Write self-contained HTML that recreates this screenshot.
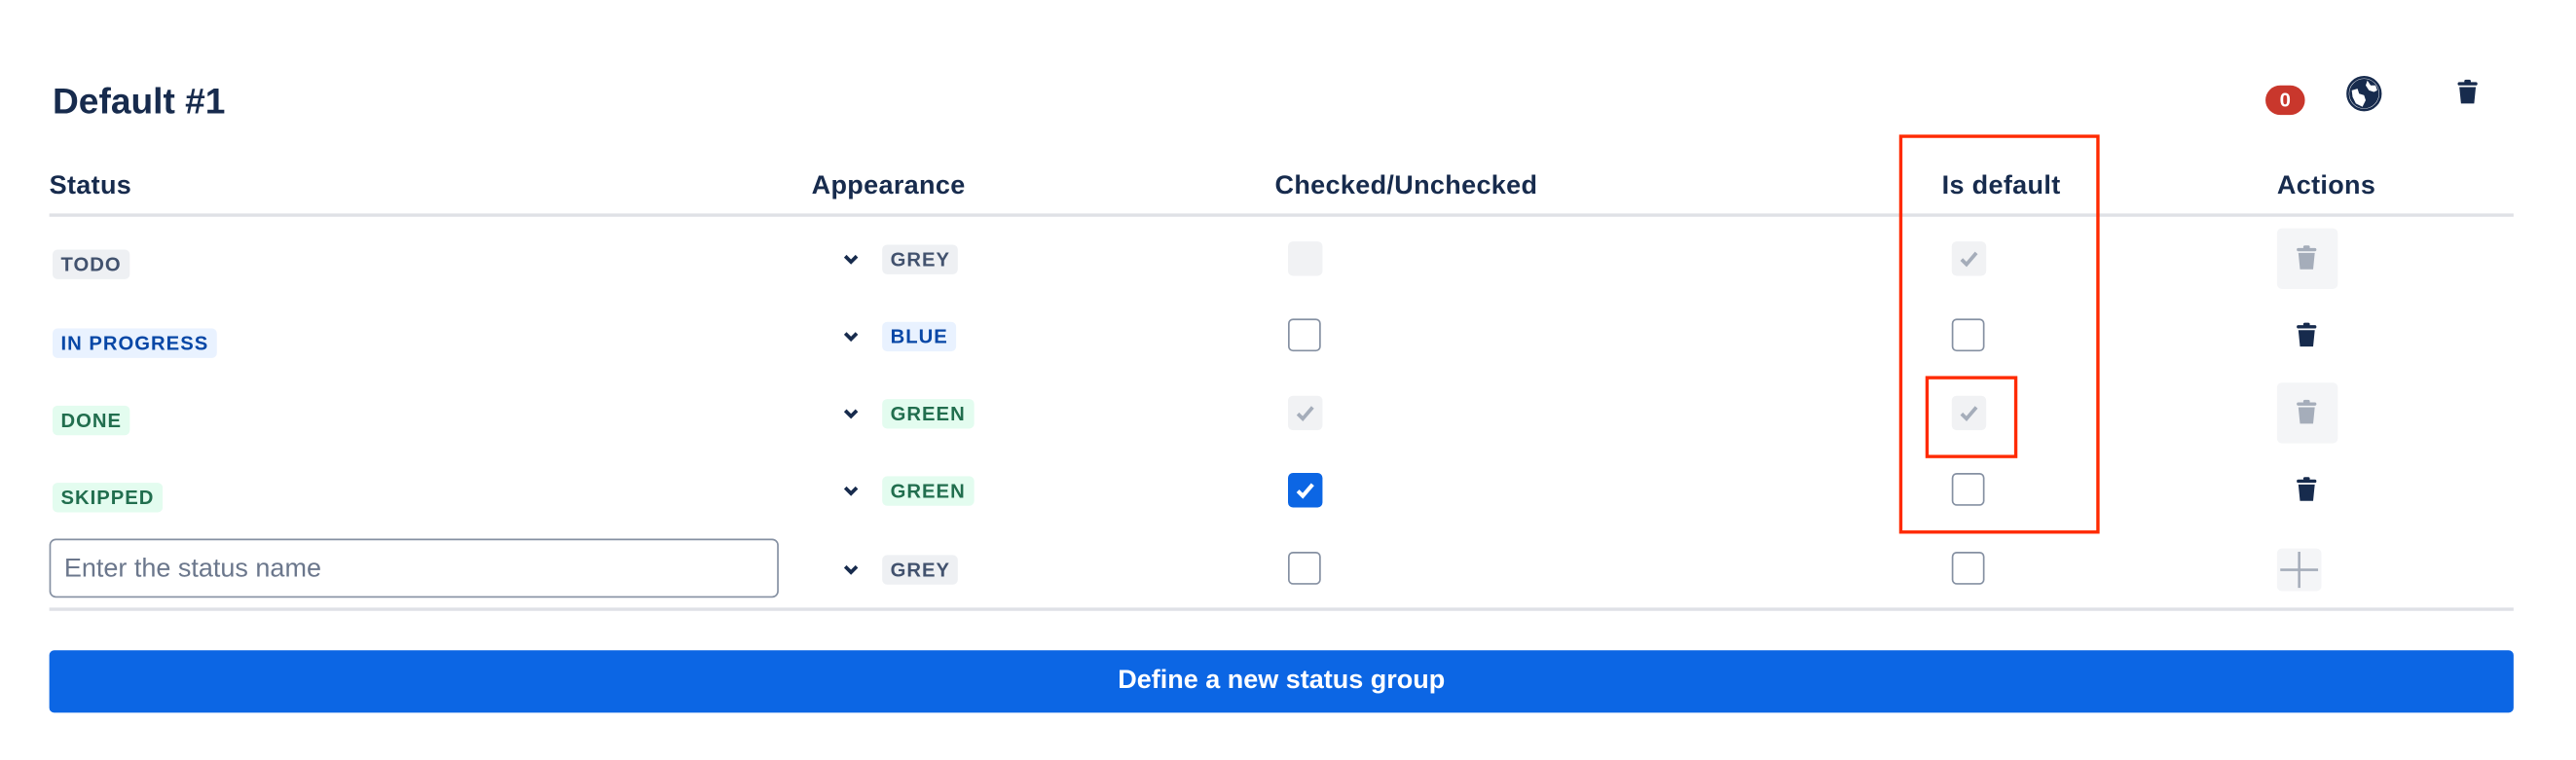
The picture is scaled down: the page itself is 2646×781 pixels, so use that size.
<!DOCTYPE html>
<html><head><meta charset="utf-8"><style>
html,body{margin:0;padding:0;background:#fff;width:2646px;height:780px;overflow:hidden}
#s{position:absolute;left:0;top:0;width:1568px;height:463px;transform:scale(1.6875);transform-origin:0 0;font-family:"Liberation Sans",sans-serif;color:#172B4D}
.a{position:absolute}
.h{position:absolute;top:105px;font-size:16px;font-weight:bold;line-height:18px;letter-spacing:0.2px}
.line{position:absolute;left:30px;width:1500px;height:2px;background:#DFE1E6}
.loz{position:absolute;font-size:12px;font-weight:bold;line-height:18px;height:18px;padding:0 5px;border-radius:3px;text-transform:uppercase;letter-spacing:0.6px}
.g{background:#EEF0F3;color:#42526E}.b{background:#E9F2FF;color:#0747A6}.gr{background:#E3FCEF;color:#216E4E}
.cb{position:absolute;width:18px;height:18px;border:1.5px solid #8590A2;border-radius:3px;box-sizing:content-box}
.dis{position:absolute;width:21px;height:21px;background:#F1F2F4;border-radius:3px}
.chev{position:absolute;width:12px;height:10px}
</style></head><body><div id="s">
<div class="a" style="left:32px;top:49px;font-size:22px;font-weight:bold;line-height:26px">Default #1</div>
<div class="a" style="left:1379px;top:52px;width:24px;height:18px;border-radius:9px;background:#C9372C;color:#fff;font-size:12px;font-weight:bold;text-align:center;line-height:18px">0</div>
<svg class="a" style="left:1428px;top:46px" width="22" height="22" viewBox="0 0 22 22"><circle cx="11" cy="11" r="9" fill="#172B4D"/><circle cx="11" cy="11" r="10" fill="none" stroke="#172B4D" stroke-width="1.5"/><path d="M3.5 9 L7 8 L8 11 L11 12 L12 15 L10 19 L6 17 L4 13Z M13 3 L15 6 L18 6 L19 9 L17 10 L14 9 L12 6Z" fill="#fff"/></svg>
<svg class="a" style="left:1495px;top:48px" width="14" height="16" viewBox="0 0 14 16"><rect x="1" y="2" width="12" height="2" rx="1" fill="#172B4D"/><rect x="5" y="0.5" width="4" height="2" rx="1" fill="#172B4D"/><path d="M2 5 H12 L11 15 H3Z" fill="#172B4D"/></svg>

<div class="h" style="left:30px">Status</div>
<div class="h" style="left:494px">Appearance</div>
<div class="h" style="left:776px">Checked/Unchecked</div>
<div class="h" style="left:1182px">Is default</div>
<div class="h" style="left:1386px">Actions</div>
<div class="line" style="top:130px"></div>

<div class="loz g" style="left:32px;top:152px">Todo</div>
<div class="loz b" style="left:32px;top:200px">In progress</div>
<div class="loz gr" style="left:32px;top:247px">Done</div>
<div class="loz gr" style="left:32px;top:294px">Skipped</div>

<svg class="chev" style="left:512px;top:153px" viewBox="0 0 12 10"><path d="M2.5 3 L6 6.5 L9.5 3" fill="none" stroke="#172B4D" stroke-width="2.2"/></svg>
<svg class="chev" style="left:512px;top:200px" viewBox="0 0 12 10"><path d="M2.5 3 L6 6.5 L9.5 3" fill="none" stroke="#172B4D" stroke-width="2.2"/></svg>
<svg class="chev" style="left:512px;top:247px" viewBox="0 0 12 10"><path d="M2.5 3 L6 6.5 L9.5 3" fill="none" stroke="#172B4D" stroke-width="2.2"/></svg>
<svg class="chev" style="left:512px;top:294px" viewBox="0 0 12 10"><path d="M2.5 3 L6 6.5 L9.5 3" fill="none" stroke="#172B4D" stroke-width="2.2"/></svg>
<svg class="chev" style="left:512px;top:342px" viewBox="0 0 12 10"><path d="M2.5 3 L6 6.5 L9.5 3" fill="none" stroke="#172B4D" stroke-width="2.2"/></svg>
<div class="loz g" style="left:537px;top:149px">Grey</div>
<div class="loz b" style="left:537px;top:196px">Blue</div>
<div class="loz gr" style="left:537px;top:243px">Green</div>
<div class="loz gr" style="left:537px;top:290px">Green</div>
<div class="loz g" style="left:537px;top:338px">Grey</div>

<div class="dis" style="left:784px;top:147px"></div>
<div class="cb" style="left:784px;top:194px"></div>
<div class="dis" style="left:784px;top:241px"><svg width="21" height="21"><path d="M6 11 L9 14 L15 7" fill="none" stroke="#A5ADBA" stroke-width="2.2"/></svg></div>
<div class="a" style="left:784px;top:288px;width:21px;height:21px;background:#0C66E4;border-radius:3px"><svg width="21" height="21"><path d="M6 11 L9 14 L15 7" fill="none" stroke="#fff" stroke-width="2.4"/></svg></div>
<div class="cb" style="left:784px;top:336px"></div>

<div class="dis" style="left:1188px;top:147px"><svg width="21" height="21"><path d="M6 11 L9 14 L15 7" fill="none" stroke="#A5ADBA" stroke-width="2.2"/></svg></div>
<div class="cb" style="left:1188px;top:194px"></div>
<div class="dis" style="left:1188px;top:241px"><svg width="21" height="21"><path d="M6 11 L9 14 L15 7" fill="none" stroke="#A5ADBA" stroke-width="2.2"/></svg></div>
<div class="cb" style="left:1188px;top:288px"></div>
<div class="cb" style="left:1188px;top:336px"></div>

<div class="a" style="left:1386px;top:139px;width:37px;height:37px;background:#F4F5F7;border-radius:3px"></div>
<svg class="a" style="left:1397px;top:149px" width="14" height="16" viewBox="0 0 14 16"><rect x="1" y="2" width="12" height="2" rx="1" fill="#A5ADBA"/><rect x="5" y="0.5" width="4" height="2" rx="1" fill="#A5ADBA"/><path d="M2 5 H12 L11 15 H3Z" fill="#A5ADBA"/></svg>
<svg class="a" style="left:1397px;top:196px" width="14" height="16" viewBox="0 0 14 16"><rect x="1" y="2" width="12" height="2" rx="1" fill="#172B4D"/><rect x="5" y="0.5" width="4" height="2" rx="1" fill="#172B4D"/><path d="M2 5 H12 L11 15 H3Z" fill="#172B4D"/></svg>
<div class="a" style="left:1386px;top:233px;width:37px;height:37px;background:#F4F5F7;border-radius:3px"></div>
<svg class="a" style="left:1397px;top:243px" width="14" height="16" viewBox="0 0 14 16"><rect x="1" y="2" width="12" height="2" rx="1" fill="#A5ADBA"/><rect x="5" y="0.5" width="4" height="2" rx="1" fill="#A5ADBA"/><path d="M2 5 H12 L11 15 H3Z" fill="#A5ADBA"/></svg>
<svg class="a" style="left:1397px;top:290px" width="14" height="16" viewBox="0 0 14 16"><rect x="1" y="2" width="12" height="2" rx="1" fill="#172B4D"/><rect x="5" y="0.5" width="4" height="2" rx="1" fill="#172B4D"/><path d="M2 5 H12 L11 15 H3Z" fill="#172B4D"/></svg>
<div class="a" style="left:1386px;top:334px;width:27px;height:26px;background:#F4F5F7;border-radius:3px"><svg width="27" height="26"><path d="M13.5 2 V24 M2 13 H25" stroke="#A5ADBA" stroke-width="1.5"/></svg></div>

<div class="a" style="left:30px;top:328px;width:434px;height:34px;border:1.5px solid #8590A2;border-radius:4px;color:#6B778C;font-size:16px;line-height:36px;padding-left:8px;box-sizing:content-box">Enter the status name</div>
<div class="line" style="top:370px"></div>

<div class="a" style="left:30px;top:396px;width:1500px;height:38px;background:#0C66E4;border-radius:3px;color:#fff;font-size:16px;font-weight:bold;text-align:center;line-height:38px">Define a new status group</div>

<div class="a" style="left:1156px;top:82px;width:118px;height:239px;border:2.5px solid #FF2A00"></div>
<div class="a" style="left:1172px;top:229px;width:52px;height:46px;border:2.5px solid #FF2A00"></div>
</div></body></html>
